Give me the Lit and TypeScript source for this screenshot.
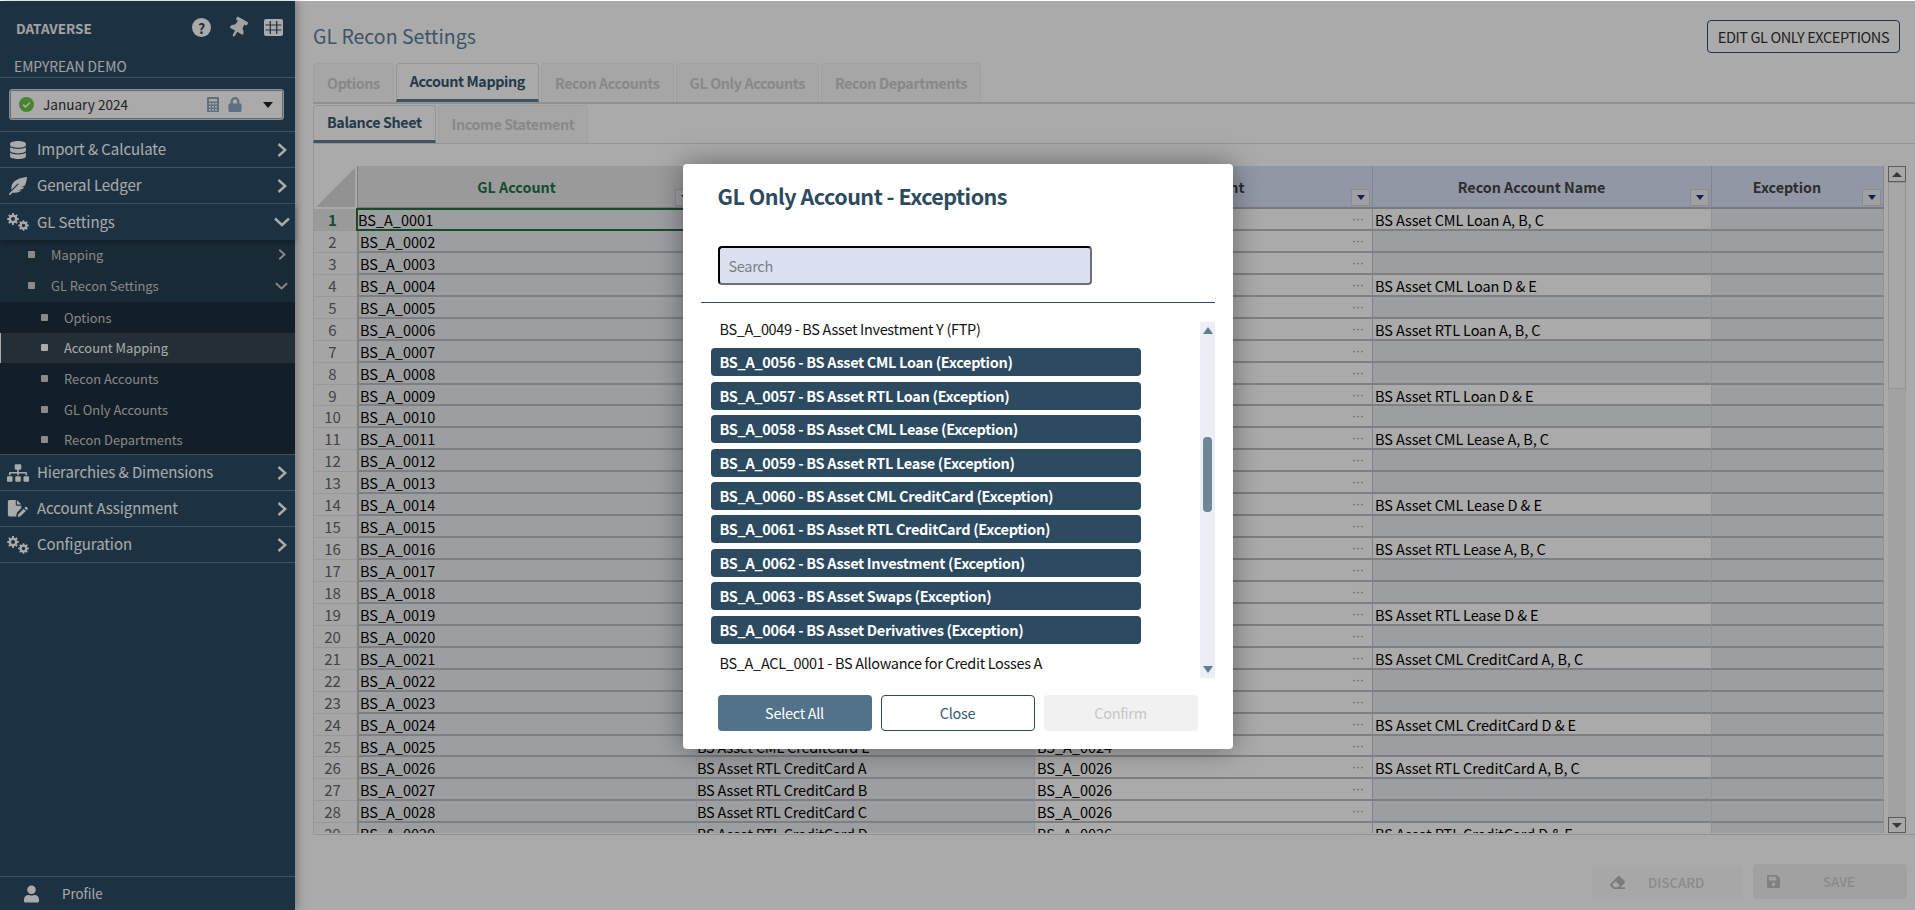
import { LitElement, html, css } from "lit";
import { customElement } from "lit/decorators.js";

const P = {
  db: ["0 0 448 512", "M448 73.143v45.714C448 159.143 347.667 192 224 192S0 159.143 0 118.857V73.143C0 32.857 100.333 0 224 0s224 32.857 224 73.143zM448 176v102.857C448 319.143 347.667 352 224 352S0 319.143 0 278.857V176c48.125 33.143 136.208 48.572 224 48.572S399.874 209.143 448 176zm0 160v102.857C448 479.143 347.667 512 224 512S0 479.143 0 438.857V336c48.125 33.143 136.208 48.572 224 48.572S399.874 369.143 448 336z"],
  feather: ["0 0 512 512", "M512 0C460.22 3.56 96.44 38.2 71.01 287.61c-3.09 26.66-4.84 53.44-5.99 80.24l178.87-178.69c6.25-6.25 16.4-6.25 22.65 0s6.25 16.38 0 22.63L7.04 471.03c-9.38 9.37-9.38 24.57 0 33.94 9.38 9.37 24.59 9.37 33.98 0l57.13-57.07c42.09-.14 84.15-2.53 125.96-7.36 53.48-5.44 97.02-26.47 132.58-56.54H255.74l146.79-48.88c11.25-14.89 21.37-30.71 30.45-47.12h-81.14l106.54-53.21C500.29 132.86 510.19 26.26 512 0z"],
  pin: ["0 0 384 512", "M298.028 214.267L285.793 96H328c13.255 0 24-10.745 24-24V24c0-13.255-10.745-24-24-24H56C42.745 0 32 10.745 32 24v48c0 13.255 10.745 24 24 24h42.207L85.972 214.267C37.465 236.82 0 277.261 0 328c0 13.255 10.745 24 24 24h136v104.007c0 1.242.289 2.467.845 3.578l24 48c2.941 5.882 11.364 5.893 14.311 0l24-48a8.008 8.008 0 0 0 .845-3.578V352h136c13.255 0 24-10.745 24-24-.001-51.183-37.983-91.42-85.973-113.733z"],
  user: ["0 0 448 512", "M224 256c70.7 0 128-57.3 128-128S294.7 0 224 0 96 57.3 96 128s57.3 128 128 128zm89.6 32h-16.7c-22.2 10.2-46.9 16-72.9 16s-50.6-5.8-72.9-16h-16.7C60.2 288 0 348.2 0 422.4V464c0 26.5 21.5 48 48 48h352c26.5 0 48-21.5 48-48v-41.6c0-74.2-60.2-134.4-134.4-134.4z"],
  sitemap: ["0 0 640 512", "M128 352H32c-17.67 0-32 14.33-32 32v96c0 17.67 14.33 32 32 32h96c17.67 0 32-14.33 32-32v-96c0-17.67-14.33-32-32-32zm-24-80h192v48h48v-48h192v48h48v-57.59c0-21.17-17.23-38.41-38.41-38.41H344v-64h40c17.67 0 32-14.33 32-32V32c0-17.67-14.33-32-32-32H256c-17.67 0-32 14.33-32 32v96c0 17.67 14.33 32 32 32h40v64H94.41C73.23 224 56 241.23 56 262.41V320h48v-48zm264 80h-96c-17.67 0-32 14.33-32 32v96c0 17.67 14.33 32 32 32h96c17.67 0 32-14.33 32-32v-96c0-17.67-14.33-32-32-32zm240 0h-96c-17.67 0-32 14.33-32 32v96c0 17.67 14.33 32 32 32h96c17.67 0 32-14.33 32-32v-96c0-17.67-14.33-32-32-32z"],
  lock: ["0 0 448 512", "M400 224h-24v-72C376 68.2 307.8 0 224 0S72 68.2 72 152v72H48c-26.5 0-48 21.5-48 48v192c0 26.5 21.5 48 48 48h352c26.5 0 48-21.5 48-48V272c0-26.5-21.5-48-48-48zm-104 0H152v-72c0-39.7 32.3-72 72-72s72 32.3 72 72v72z"],
  save: ["0 0 448 512", "M433.941 129.941l-83.882-83.882A48 48 0 0 0 316.118 32H48C21.49 32 0 53.49 0 80v352c0 26.51 21.49 48 48 48h352c26.51 0 48-21.49 48-48V163.882a48 48 0 0 0-14.059-33.941zM224 416c-35.346 0-64-28.654-64-64 0-35.346 28.654-64 64-64s64 28.654 64 64c0 35.346-28.654 64-64 64zm96-304.52V212c0 6.627-5.373 12-12 12H76c-6.627 0-12-5.373-12-12V108c0-6.627 5.373-12 12-12h228.52c3.183 0 6.235 1.264 8.485 3.515l3.48 3.48A11.996 11.996 0 0 1 320 111.48z"],
  eraser: ["0 0 512 512", "M497.941 273.941c18.745-18.745 18.745-49.137 0-67.882l-160-160c-18.745-18.745-49.136-18.746-67.883 0l-256 256c-18.745 18.745-18.745 49.137 0 67.882l96 96A48.004 48.004 0 0 0 144 480h356c6.627 0 12-5.373 12-12v-40c0-6.627-5.373-12-12-12H355.883l142.058-142.059zm-302.627-62.627l137.373 137.373L265.373 416H150.628l-80-80 124.686-124.686z"],
  file: ["0 0 576 512", "M0 48C0 21.5 21.5 0 48 0h176v128c0 17.7 14.3 32 32 32h128v70L268 346c-8 8-13 18-15 29l-13 65c-2 10 1 20 8 27l-200 0c-26.500 0-48-21.500-48-48zM256 0l128 128H256zM560 224l-22-22c-12-12-30-12-42 0l-24 24 64 64 24-24c12-12 12-30 0-42zM450 248L296 402l-16 78 78-16 154-154z"],
};

function ic(k: keyof typeof P, cls: string) {
  const [vb, d] = P[k];
  return html`<svg class=${cls} viewBox=${vb} aria-hidden="true"><path fill="currentColor" d=${d}></path></svg>`;
}

function gear(cx: number, cy: number, r: number, hole: number, teeth = 8) {
  let d = "";
  const outer = r, inner = r * 0.74;
  const step = (Math.PI * 2) / teeth;
  for (let i = 0; i < teeth; i++) {
    const a = i * step;
    const pts = [[a - step * 0.3, inner], [a - step * 0.18, outer], [a + step * 0.18, outer], [a + step * 0.3, inner]];
    for (const [t, rr] of pts) {
      d += `${d ? "L" : "M"}${(cx + Math.cos(t) * rr).toFixed(2)} ${(cy + Math.sin(t) * rr).toFixed(2)}`;
    }
  }
  d += `ZM${cx + hole} ${cy}a${hole} ${hole} 0 1 0 ${-hole * 2} 0a${hole} ${hole} 0 1 0 ${hole * 2} 0Z`;
  return d;
}
const cogs = () => html`<svg class="nav-ic" viewBox="0 0 22 18" aria-hidden="true"><path fill="currentColor" fill-rule="evenodd" d=${gear(6, 6, 6, 2)}></path><path fill="currentColor" fill-rule="evenodd" d=${gear(16.5, 12.5, 5.4, 1.8)}></path></svg>`;
const chevR = (c = "chev") => html`<svg class=${c} viewBox="0 0 10 14" aria-hidden="true"><path d="M1.5 1 8.200 7 1.500 13" fill="none" stroke="currentColor" stroke-width="2.4"></path></svg>`;
const chevD = (c = "chevd") => html`<svg class=${c} viewBox="0 0 16 10" aria-hidden="true"><path d="M1 1.500 8 8 15 1.500" fill="none" stroke="currentColor" stroke-width="2.4"></path></svg>`;

const RECON: Record<number, string> = {
  1: "BS Asset CML Loan A, B, C", 4: "BS Asset CML Loan D & E", 6: "BS Asset RTL Loan A, B, C", 9: "BS Asset RTL Loan D & E",
  11: "BS Asset CML Lease A, B, C", 14: "BS Asset CML Lease D & E", 16: "BS Asset RTL Lease A, B, C", 19: "BS Asset RTL Lease D & E",
  21: "BS Asset CML CreditCard A, B, C", 24: "BS Asset CML CreditCard D & E", 26: "BS Asset RTL CreditCard A, B, C", 29: "BS Asset RTL CreditCard D & E",
};
const NAMES: Record<number, [string, string]> = {
  25: ["BS Asset CML CreditCard E", "BS_A_0024"], 26: ["BS Asset RTL CreditCard A", "BS_A_0026"], 27: ["BS Asset RTL CreditCard B", "BS_A_0026"],
  28: ["BS Asset RTL CreditCard C", "BS_A_0026"], 29: ["BS Asset RTL CreditCard D", "BS_A_0026"],
};
const EXC = [
  ["BS_A_0049 - BS Asset Investment Y (FTP)", false],
  ["BS_A_0056 - BS Asset CML Loan (Exception)", true],
  ["BS_A_0057 - BS Asset RTL Loan (Exception)", true],
  ["BS_A_0058 - BS Asset CML Lease (Exception)", true],
  ["BS_A_0059 - BS Asset RTL Lease (Exception)", true],
  ["BS_A_0060 - BS Asset CML CreditCard (Exception)", true],
  ["BS_A_0061 - BS Asset RTL CreditCard (Exception)", true],
  ["BS_A_0062 - BS Asset Investment (Exception)", true],
  ["BS_A_0063 - BS Asset Swaps (Exception)", true],
  ["BS_A_0064 - BS Asset Derivatives (Exception)", true],
  ["BS_A_ACL_0001 - BS Allowance for Credit Losses A", false],
] as [string, boolean][];

@customElement("app-root")
export class AppRoot extends LitElement {
  static styles = css`
    :host { display: block; width: 1915px; height: 910px; overflow: hidden; position: relative; background: #fff;
      font-family: "Noto Sans CJK SC", "Noto Sans", sans-serif; }
    * { box-sizing: border-box; }
    .app { display: flex; height: 909px; margin-top: 1px; background: #fff; }
    .overlay { position: absolute; z-index: 10; inset: 1px 0 0 0; background: rgba(0,0,0,.333); display: flex; align-items: flex-start; justify-content: center; padding-top: 163px; }

    /* sidebar */
    .side { width: 295px; flex: none; background: #2a4b64; color: #fff; display: flex; flex-direction: column; box-shadow: 3px 0 8px rgba(0,0,0,.25); position: relative; }
    .brand { height: 55px; display: flex; align-items: center; padding: 0 12px 2px 16px; font-weight: 700; font-size: 13.500px; color: #f4f4f4; }
    .brand span { flex: 1; }
    .qm { width: 19px; height: 19px; border-radius: 50%; background: #fff; color: #2a4b64; font-size: 14px; font-weight: 700; display: flex; align-items: center; justify-content: center; margin-right: 19px; line-height: 1; }
    .pin { width: 16px; height: 20px; transform: rotate(30deg); margin-right: 18px; }
    .grid-ic { width: 19px; height: 17px; }
    .org { height: 22px; padding-left: 14px; font-size: 13.800px; line-height: 20px; border-bottom: 1px solid #5d7a8d; color: #f2f2f2; }
    .period-wrap { height: 54px; padding: 11px 11px 0 9px; border-bottom: 1px solid #5d7a8d; }
    .period { height: 31px; background: #fff; border: 1px solid #d3d7da; border-radius: 3px; box-shadow: 0 0 0 1px #9aa4ab inset; display: flex; align-items: center; padding: 0 0 0 9px; color: #333; font-size: 13.600px; }
    .check { width: 15px; height: 15px; margin-right: 9px; }
    .period .txt { flex: 1; padding-bottom: 1px; }
    .calc { width: 12px; height: 15px; color: #8fa9bd; margin-right: 9px; }
    .lock { width: 14px; height: 15px; color: #8fa9bd; margin-right: 21px; }
    .tri { width: 0; height: 0; border-left: 5px solid transparent; border-right: 5px solid transparent; border-top: 6px solid #222; margin-right: 10px; }
    .nav { height: 36px; display: flex; align-items: center; border-bottom: 1px solid #5d7a8d; color: #fff; font-size: 15px; letter-spacing: -0.08px; padding: 0 7px 0 7px; }
    .nav .label { flex: 1; margin-left: 8px; padding-bottom: 2px; }
    .nav-ic { width: 22px; height: 18px; flex: none; color: #fff; }
    .chev { width: 10px; height: 14px; margin-right: 1px; flex: none; }
    .chevd { width: 16px; height: 10px; margin-right: -2px; flex: none; }
    .nav.open { border-bottom: none; position: relative; box-shadow: 0 2px 5px rgba(0,0,0,.3); }
    .sub { background: #243f52; }
    .s1 { height: 31px; display: flex; align-items: center; padding: 0 8px 2px 28px; font-size: 12.900px; color: #ccc; }
    .bullet { width: 7px; height: 7px; background: #d0d0d0; border-radius: 1px; flex: none; margin-right: 16px; }
    .s1 .label { flex: 1; }
    .s1 .chev { width: 8px; height: 11px; }
    .s1 .chevd { width: 13px; height: 8px; margin-right: -1px; }
    .sub2 { background: #1b2f3c; height: 153px; border-bottom: 1px solid #5d7a8d; }
    .s2 { padding: 0 0 0 41px; height: 30.600px; }
    .s2.on { background: #364552; color: #fff; border-left: 1px solid #fff; padding-left: 40px; }
    .s2.on .bullet { background: #fff; }
    .spacer { flex: 1; }
    .profile { height: 34px; border-top: 1px solid #5d7a8d; display: flex; align-items: center; padding-left: 24px; font-size: 13.300px; color: #fff; }
    .profile svg { width: 15px; height: 18px; margin-right: 23px; }

    /* main */
    .main { flex: 1; min-width: 0; padding-left: 18px; display: flex; flex-direction: column; }
    .head { height: 62px; display: flex; align-items: flex-start; justify-content: space-between; padding-right: 15px; }
    h1 { margin: 21px 0 0; font-size: 19.500px; font-weight: 400; color: #5c7f9b; line-height: 28px; }
    .edit { margin-top: 19px; width: 193px; height: 33px; border: 1px solid #354f63; border-radius: 4px; background: transparent; color: #333; font: 400 14.500px "Noto Sans CJK SC", sans-serif; letter-spacing: -0.4px; padding: 0 0 1px; }
    .tabs { display: flex; height: 41px; border-bottom: 2px solid #d8d8d8; }
    .tab { height: 39px; background: #f9f9f9; border: 1px solid #f1f1f1; border-bottom: none; border-radius: 4px 4px 0 0; padding: 0 13px; margin-right: 2px; font-size: 14.300px; letter-spacing: -0.38px; font-weight: 700; color: #cdcdcd; line-height: 37px; }
    .tab.on { background: #ffffff; border-color: #e0e0e0; color: #34576f; line-height: 33px; border-bottom: 3px solid #5c7f9b; }
    .subtabs { display: flex; height: 40px; border-bottom: 1px solid #dfdfdf; }
    .subtabs .tab { height: 38px; margin-top: 1px; line-height: 35px; }
    .subtabs .tab.on { line-height: 31px; border-bottom: 3px solid #5c7f9b; color: #34576f; }
    .content { height: 691px; border-left: 1px solid #e2e2e2; border-bottom: 1px solid #dcdcdc; padding: 22px 0 0 0; display: flex; overflow: hidden; }
    .sheet { width: 1570px; height: 667px; overflow: hidden; display: grid; grid-template-columns: 43px 340px 338px 338px 339px 172px; grid-template-rows: 43px; grid-auto-rows: 21.950px; font-size: 14.500px; color: #000; line-height: 21px; }
    .corner { background: #fff; position: relative; }
    .corner svg { position: absolute; left: 2px; top: 2px; width: 39px; height: 39px; }
    .hd { background: #dae3f8; border-right: 1px solid #c4c8d2; border-bottom: 2px solid #b4b8c2; font-weight: 700; font-size: 14.300px; text-align: center; line-height: 42px; color: #444; position: relative; padding-right: 21px; }
    .hd.sel { background: #e8e8e8; color: #217346; border-left: 1px solid #c0c0c0; }
    .fb { position: absolute; right: 2px; bottom: 1px; width: 19px; height: 17px; background: #eef0f5; border: 1px solid #cfd3dc; display: flex; align-items: center; justify-content: center; }
    .fb::after { content: ""; border-left: 4px solid transparent; border-right: 4px solid transparent; border-top: 5px solid #1f2f80; }
    .rn { background: #f8f8f8; border-bottom: 1px solid #e4e4e4; color: #666; text-align: center; font-size: 15px; padding-right: 6px; }
    .rn.sel { background: #e8e8e8; color: #217346; font-weight: 700; }
    .c { background: #eceef0; border-right: 1px solid #dcdee2; border-bottom: 2px solid #bcbfc4; padding-left: 2px; white-space: nowrap; overflow: hidden; }
    .c.a { border-left: 2px solid #c0c3c8; padding-left: 1px; }
    .c.b { padding-left: 0; letter-spacing: -0.2px; }
    .c.w { background: #fff; letter-spacing: -0.1px; }
    .c.dd { background: #ffffff; display: flex; justify-content: space-between; padding-right: 8px; border-right: 1px solid #c0c3c8; }
    .dots { color: #888; font: 12px/20px "Liberation Sans", sans-serif; }
    .c.sel { border: 2px solid #217346; padding-left: 0; line-height: 20px; margin-top: -1px; margin-left: -1px; position: relative; }
    .vs { width: 18px; height: 667px; margin-left: 4px; background: #f4f4f4; position: relative; display: flex; flex-direction: column; }
    .vb { height: 16px; background: #fdfdfd; border: 1px solid #8a8a8a; display: flex; align-items: center; justify-content: center; flex: none; }
    .vb i { border-left: 5px solid transparent; border-right: 5px solid transparent; }
    .vb.up i { border-bottom: 5px solid #555; }
    .vb.dn i { border-top: 5px solid #555; }
    .vt { height: 207px; background: #fbfbfb; border: 1px solid #e0e0e0; flex: none; }
    .vsp { flex: 1; }
    .foot { flex: 1; display: flex; justify-content: flex-end; padding: 30px 8px 0 0; gap: 10px; }
    .fbtn { height: 34px; border-radius: 4px; background: #fafafa; display: flex; align-items: center; color: #d0d0d0; font: 500 13.300px "Noto Sans CJK SC", sans-serif; border: 0; }
    .discard { width: 151px; padding-left: 18px; background: #fbfbfb; }
    .discard svg { width: 15px; height: 15px; margin-right: 23px; color: #bbb; }
    .savebtn { width: 154px; height: 35px; padding-left: 14px; background: #f2f2f2; margin-top: -1px; }
    .savebtn svg { width: 13px; height: 15px; margin-right: 43px; color: #c0c0c0; }

    /* modal */
    .modal { width: 550px; height: 585px; background: #fff; border-radius: 4px; box-shadow: 0 0 28px rgba(0,0,0,.4); padding: 0 18px; display: flex; flex-direction: column; position: relative; }
    .mt { margin: 15px 0 0 17px; font-size: 21.500px; letter-spacing: -0.5px; font-weight: 700; color: #2c4a60; line-height: 34px; }
    .search { margin: 33px 0 0 17px; width: 374px; height: 39px; background: #dbe1f1; border: 2px inset #767676; border-top-color: #222; border-left-color: #222; border-bottom-color: #6f6f6f; border-right-color: #6f6f6f; border-radius: 4px; padding: 0 0 1px 9px; font: 400 14.500px "Noto Sans CJK SC", sans-serif; letter-spacing: -0.3px; outline: none; color: #333; flex: none; }
    .search::placeholder { color: #7a7f87; opacity: 1; }
    .hr { height: 1px; background: #2c4a60; margin-top: 17px; flex: none; }
    .mbody { display: flex; height: 363px; margin-top: 12px; }
    .list { width: 499px; padding: 0 0 0 10px; display: flex; flex-direction: column; gap: 5.400px; }
    .it { width: 430px; height: 28px; line-height: 27px; padding-left: 9px; font-size: 14.500px; letter-spacing: -0.32px; color: #111; flex: none; white-space: nowrap; }
    .it.on { background: #2c4a60; color: #fff; font-weight: 700; border-radius: 4px; }
    .ms { width: 15px; height: 356px; margin-top: 7px; background: #ebeff5; position: relative; }
    .ms .u, .ms .d { position: absolute; left: 3px; border-left: 5px solid transparent; border-right: 5px solid transparent; }
    .ms .u { top: 5px; border-bottom: 7px solid #5f7e98; }
    .ms .d { bottom: 5px; border-top: 7px solid #5f7e98; }
    .ms .th { position: absolute; left: 3px; width: 9px; top: 115px; height: 75px; background: #6f8699; border-radius: 4px; }
    .mfoot { display: flex; gap: 9px; padding-left: 17px; margin-top: 17px; }
    .mb { width: 154px; height: 36px; border-radius: 4px; font: 400 14.500px "Noto Sans CJK SC", sans-serif; letter-spacing: -0.3px; border: 1px solid transparent; padding: 0 0 2px; }
    .mb.p { background: #52728c; color: #fff; }
    .mb.o { background: #fff; border-color: #2c4a60; color: #3a5a74; }
    .mb.x { background: #f1f1f1; color: #c6c6c6; }
  `;

  private sheet() {
    const rows = [];
    for (let i = 1; i <= 29; i++) {
      const n = String(i).padStart(4, "0");
      const nm = NAMES[i] || ["", ""];
      const r = RECON[i] || "";
      rows.push(html`
        <div class="rn ${i === 1 ? "sel" : ""}">${i}</div>
        <div class="c a ${i === 1 ? "sel" : ""}">BS_A_${n}</div>
        <div class="c b">${nm[0]}</div>
        <div class="c dd"><span>${nm[1]}</span><span class="dots">···</span></div>
        <div class="c ${r ? "w" : ""}">${r}</div>
        <div class="c"></div>`);
    }
    return rows;
  }

  render() {
    return html`
      <div class="app">
        <aside class="side">
          <div class="brand"><span>DATAVERSE</span><div class="qm">?</div>${ic("pin", "pin")}
            <svg class="grid-ic" viewBox="0 0 19 17" aria-hidden="true"><rect width="19" height="17" rx="2" fill="#fff"></rect><path d="M6.300 2v13M12.700 2v13M1.500 6h16M1.500 11h16" stroke="#2a4b64" stroke-width="1.200"></path></svg></div>
          <div class="org">EMPYREAN DEMO</div>
          <div class="period-wrap"><div class="period">
            <svg class="check" viewBox="0 0 15 15" aria-hidden="true"><circle cx="7.500" cy="7.500" r="7.500" fill="#6cc644"></circle><path d="M4.200 7.700 6.600 10 10.800 5.500" fill="none" stroke="#fff" stroke-width="1.600"></path></svg>
            <span class="txt">January 2024</span>
            <svg class="calc" viewBox="0 0 12 15" aria-hidden="true"><rect width="12" height="15" rx="1" fill="currentColor"></rect><path d="M2 2h8v2.500H2zM2 6h2v1.500H2zM5 6h2v1.500H5zM8 6h2v1.500H8zM2 9h2v1.500H2zM5 9h2v1.500H5zM8 9h2v1.500H8zM2 12h2v1.500H2zM5 12h2v1.500H5zM8 12h2v1.500H8z" fill="#fff"></path></svg>
            ${ic("lock", "lock")}<div class="tri"></div></div></div>
          <div class="nav">${ic("db", "nav-ic")}<span class="label">Import &amp; Calculate</span>${chevR()}</div>
          <div class="nav">${ic("feather", "nav-ic")}<span class="label">General Ledger</span>${chevR()}</div>
          <div class="nav open">${cogs()}<span class="label">GL Settings</span>${chevD()}</div>
          <div class="sub">
            <div class="s1"><div class="bullet"></div><span class="label">Mapping</span>${chevR()}</div>
            <div class="s1"><div class="bullet"></div><span class="label">GL Recon Settings</span>${chevD()}</div>
          </div>
          <div class="sub2">
            <div class="s1 s2"><div class="bullet"></div>Options</div>
            <div class="s1 s2 on"><div class="bullet"></div>Account Mapping</div>
            <div class="s1 s2"><div class="bullet"></div>Recon Accounts</div>
            <div class="s1 s2"><div class="bullet"></div>GL Only Accounts</div>
            <div class="s1 s2"><div class="bullet"></div>Recon Departments</div>
          </div>
          <div class="nav">${ic("sitemap", "nav-ic")}<span class="label">Hierarchies &amp; Dimensions</span>${chevR()}</div>
          <div class="nav">${ic("file", "nav-ic")}<span class="label">Account Assignment</span>${chevR()}</div>
          <div class="nav">${cogs()}<span class="label">Configuration</span>${chevR()}</div>
          <div class="spacer"></div>
          <div class="profile">${ic("user", "")}Profile</div>
        </aside>
        <main class="main">
          <div class="head"><h1>GL Recon Settings</h1><button class="edit">EDIT GL ONLY EXCEPTIONS</button></div>
          <div class="tabs">
            <div class="tab">Options</div><div class="tab on">Account Mapping</div><div class="tab">Recon Accounts</div><div class="tab">GL Only Accounts</div><div class="tab">Recon Departments</div>
          </div>
          <div class="subtabs"><div class="tab on">Balance Sheet</div><div class="tab">Income Statement</div></div>
          <div class="content">
            <div class="sheet">
              <div class="corner"><svg viewBox="0 0 39 39" aria-hidden="true"><path d="M39 0V39H0Z" fill="#dcdcdc"></path></svg></div>
              <div class="hd sel">GL Account<div class="fb"></div></div>
              <div class="hd"><div class="fb"></div></div>
              <div class="hd">Recon Account<div class="fb"></div></div>
              <div class="hd">Recon Account Name<div class="fb"></div></div>
              <div class="hd">Exception<div class="fb"></div></div>
              ${this.sheet()}
            </div>
            <div class="vs"><div class="vb up"><i></i></div><div class="vt"></div><div class="vsp"></div><div class="vb dn"><i></i></div></div>
          </div>
          <div class="foot">
            <button class="fbtn discard">${ic("eraser", "")}DISCARD</button>
            <button class="fbtn savebtn">${ic("save", "")}SAVE</button>
          </div>
        </main>
      </div>
      <div class="overlay">
        <div class="modal">
          <div class="mt">GL Only Account - Exceptions</div>
          <input class="search" placeholder="Search" />
          <div class="hr"></div>
          <div class="mbody">
            <div class="list">${EXC.map(([t, on]) => html`<div class="it ${on ? "on" : ""}">${t}</div>`)}</div>
            <div class="ms"><div class="u"></div><div class="th"></div><div class="d"></div></div>
          </div>
          <div class="mfoot">
            <button class="mb p">Select All</button><button class="mb o">Close</button><button class="mb x">Confirm</button>
          </div>
        </div>
      </div>`;
  }
}
